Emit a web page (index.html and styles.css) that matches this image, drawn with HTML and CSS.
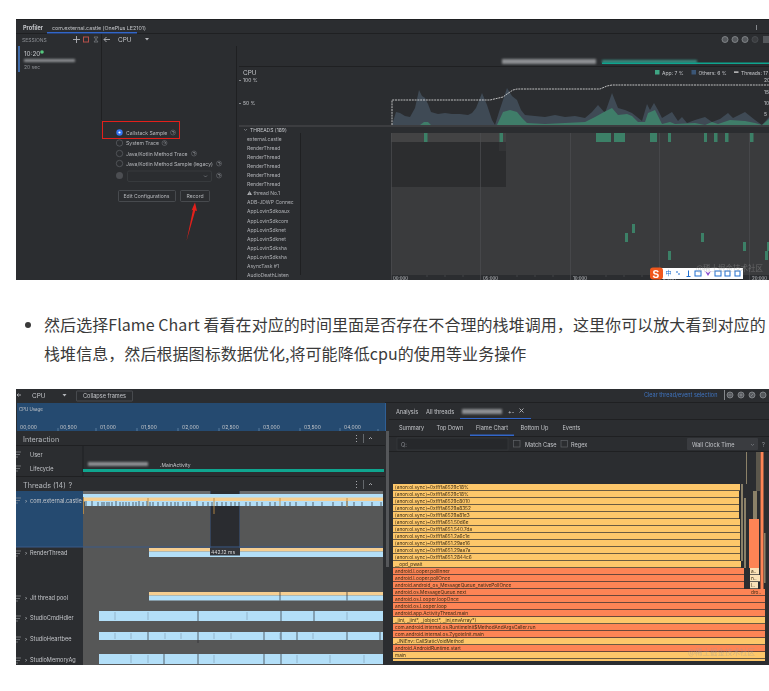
FILE: index.html
```html
<!DOCTYPE html>
<html lang="zh-CN">
<head>
<meta charset="utf-8">
<title>Profiler CPU</title>
<link rel="stylesheet" href="styles.css">
</head>
<body>
<main class="article">
<svg class="shot shot-one" viewBox="16 19 753 261" width="753" height="261" role="img" aria-label="Android Studio Profiler">
  <rect class="bg" x="16" y="19" width="753" height="261"/>
  <rect class="line" x="16" y="33" width="753" height="1"/>
  <rect class="line" x="16" y="19" width="753" height="1"/>
  <rect class="line" x="101" y="34" width="1" height="86"/>
  <rect class="line" x="236" y="46" width="1" height="234"/>
  <text class="t b" x="23" y="29.500">Profiler</text>
  <text class="t tab" x="52" y="29.500">com.external.castle (OnePlus LE2101)</text>
  <rect class="accent" x="47" y="32" width="90" height="1.500"/>
  <text class="t xs dim" x="22" y="41.500">SESSIONS</text>
  <path class="ic" d="M73 39.500h7M76.500 36v7M104 39.500h6M104 39.500l2.500-2.500M104 39.500l2.500 2.500"/>
  <rect class="ic-red" x="83.500" y="37" width="5" height="5"/>
  <path class="ic-dim" d="M94 37h4l-4 5h4z"/>
  <text class="t m" x="118" y="41.800">CPU</text>
  <path class="tri" d="M145 38h4l-2 2.500z"/>
  <rect class="session" x="18" y="46" width="2" height="26"/>
  <text class="t m" x="24" y="55.500">10:20</text>
  <circle class="live" cx="42" cy="52" r="1.800"/>
  <rect class="smear" x="24" y="59" width="51" height="3"/>
  <text class="t xs dim" x="24" y="69">20 sec</text>

  <rect class="line" x="239" y="66" width="530" height="1"/>
  <rect class="smear" x="502" y="59" width="94" height="5"/>
  <rect class="smear-teal" x="602" y="60" width="95" height="3"/>
  <rect class="teal" x="602" y="62.500" width="167" height="1.500"/>
  <g class="round-ic">
    <circle cx="725" cy="39.500" r="3"/><circle cx="735" cy="39.500" r="3"/><circle cx="745" cy="39.500" r="3"/><circle class="off" cx="755" cy="39.500" r="3"/>
  </g>
  <rect class="chip" x="763" y="36" width="6" height="7"/>
  <rect class="ic-rect" x="756" y="25" width="1" height="5"/>

  <text class="t m" x="243" y="75">CPU</text>
  <text class="t xs" x="243" y="82.200">100 %</text>
  <text class="t xs" x="243" y="105">50 %</text>
  <rect class="ic-rect" x="239" y="80" width="2" height="1"/>
  <rect class="ic-rect" x="239" y="103" width="2" height="1"/>
  <rect class="legend-app" x="655" y="70" width="4.500" height="4.500"/>
  <text class="t xs" x="662" y="75">App: 7 %</text>
  <rect class="legend-other" x="691.500" y="70" width="4.500" height="4.500"/>
  <text class="t xs" x="698.500" y="75">Others: 6 %</text>
  <rect class="white" x="734" y="71.500" width="4.500" height="1.200"/>
  <text class="t xs" x="741" y="75">Threads: 17</text>
  <text class="t xs" x="764" y="82">20</text>
  <text class="t xs" x="764" y="94">15</text>
  <text class="t xs" x="764" y="105">10</text>
  <text class="t xs" x="764" y="116">5</text>

  <path class="area-other" d="M392 125L396 112 400 113 405 116 410 117 415 108 419 90 422 96 425 98 428 104 431 112 438 114 445 113 452 114 460 114 468 115 472 113 476 108 482 93 487 105 492 120 495 125 499 112 503 100 507 88 512 96 517 100 521 110 525 115 535 116 545 117 555 115 565 117 575 116 585 118 592 112 598 105 605 113 612 93 618 108 625 110 632 113 642 121 647 104 650 110 654 103 658 110 662 118 667 115 672 112 678 121 682 117 687 123 695 120 705 117 712 122 720 119 728 113 733 118 745 112 755 120 762 125 769 117V126H392z"/>
  <path class="area-app" d="M420 125L424 122 428 122 431 125 H497L503 112 510 110 517 112 522 118 527 123 545 124 565 123 585 122 595 117 604 112 612 108 618 115 627 114 632 116 638 122 645 122 648 113 655 110 659 118 662 124 670 122 675 124 695 123 705 125 712 122 718 124 730 120 745 121 755 123 762 125 769 119V126H420z"/>
  <path class="threads-line" d="M392 125V100H490L503 97 507 94 513 90 517 89H600L607 86 612 85H769"/>

  <rect class="divider" x="239" y="125" width="530" height="2"/>
  <path class="ic-thin" d="M244 129l1.500 1.500 1.500-1.500"/>
  <text class="t xs" x="250" y="132">THREADS (189)</text>
  <rect class="line" x="300" y="133" width="1" height="142"/>
  <g class="t thread">
    <text x="247" y="140.500">external.castle</text>
    <text x="247" y="149.500">RenderThread</text>
    <text x="247" y="158.700">RenderThread</text>
    <text x="247" y="167.800">RenderThread</text>
    <text x="247" y="177">RenderThread</text>
    <text x="247" y="186">RenderThread</text>
    <text x="247" y="195">⚠ thread No.1</text>
    <text x="247" y="204.200">ADB-JDWP Connec</text>
    <text x="247" y="213.300">AppLovinSdkoaux</text>
    <text x="247" y="222.500">AppLovinSdkcom</text>
    <text x="247" y="231.500">AppLovinSdknet</text>
    <text x="247" y="240.500">AppLovinSdknet</text>
    <text x="247" y="249.800">AppLovinSdksha</text>
    <text x="247" y="259">AppLovinSdksha</text>
    <text x="247" y="268">AsyncTask #1</text>
    <text x="247" y="276.500">AudioDeathListen</text>
  </g>
  <rect class="track" x="391" y="133" width="378" height="142"/>
  <rect class="track-row" x="391" y="133" width="115" height="9"/>
  <rect class="track-dark" x="391" y="142" width="115" height="45"/>
  <rect class="track-mid" x="499" y="142" width="7" height="9"/>
  <path class="grid" d="M391.500 133V280M480.500 133V280M570.500 133V280M659.500 133V280M749.500 133V280"/>
  <g class="run">
    <rect x="424" y="133" width="3.500" height="9"/><rect x="499.500" y="133" width="3.500" height="9"/><rect x="596" y="133" width="15" height="9"/><rect x="614" y="133" width="11" height="9"/><rect x="650" y="133" width="7" height="9"/><rect x="668" y="133" width="3" height="9"/><rect x="704" y="133" width="3" height="9"/><rect x="714" y="133" width="3.500" height="9"/><rect x="725" y="133" width="3.500" height="9"/><rect x="750" y="133" width="3.500" height="9"/>
    <rect x="632" y="224" width="3" height="9"/><rect x="625" y="233" width="3" height="9"/><rect x="701" y="233" width="3" height="9"/><rect x="743" y="242" width="3" height="9"/><rect x="767" y="242" width="2" height="9"/><rect x="668" y="251" width="3" height="9"/><rect x="765" y="251" width="3" height="9"/>
  </g>
  <rect class="axis" x="391" y="275" width="378" height="5"/>
  <path class="grid" d="M391.500 275V280M480.500 275V280M570.500 275V280M659.500 275V280M749.500 275V280M427 275v2M445 275v2M463 275v2M517 275v2M535 275v2M553 275v2M606 275v2M624 275v2M642 275v2M695 275v2M713 275v2M731 275v2"/>
  <g class="t xxs">
    <text x="393" y="280">00:000</text><text x="483" y="280">05:000</text><text x="573" y="280">10:000</text><text x="662" y="281.500">15:000</text><text x="752" y="280">20:000</text>
  </g>

  <rect class="redbox" x="102.500" y="121.500" width="77" height="17"/>
  <circle class="radio-on" cx="119.500" cy="132.500" r="3.200"/>
  <circle class="radio-dot" cx="119.500" cy="132.500" r="1.100"/>
  <circle class="radio" cx="119.500" cy="143" r="3.200"/>
  <circle class="radio" cx="119.500" cy="153.500" r="3.200"/>
  <circle class="radio" cx="119.500" cy="163.500" r="3.200"/>
  <circle class="radio-dis" cx="119.500" cy="175.500" r="3.500"/>
  <g class="t opt">
    <text x="126" y="135">Callstack Sample</text>
    <text x="126" y="145.300">System Trace</text>
    <text x="126" y="155.600">Java/Kotlin Method Trace</text>
    <text x="126" y="165.900">Java/Kotlin Method Sample (legacy)</text>
  </g>
  <g class="help">
    <circle cx="173" cy="132.500" r="2.500"/><circle cx="164.500" cy="143" r="2.500"/><circle cx="194" cy="153.500" r="2.500"/><circle cx="219" cy="163.500" r="2.500"/><circle cx="219" cy="175.500" r="2.500"/>
  </g>
  <path class="ic-thin" d="M172 131.800q1-1 2 0t-1 1.500M163.500 142.300q1-1 2 0t-1 1.500M193 152.800q1-1 2 0t-1 1.500M218 162.800q1-1 2 0t-1 1.500M218 174.800q1-1 2 0t-1 1.500"/>
  <rect class="field" x="127.500" y="171" width="84" height="10.500" rx="1.500"/>
  <path class="ic-dim" d="M204 175.500l1.500 1.500 1.500-1.500"/>
  <rect class="btn" x="118.500" y="190.500" width="57" height="11" rx="1"/>
  <rect class="btn" x="180.500" y="190.500" width="29" height="11" rx="1"/>
  <text class="t opt" x="123.500" y="198">Edit Configurations</text>
  <text class="t opt" x="186.500" y="198">Record</text>
  <path class="red-arrow" d="M195 202.500L197 211 195.300 210.500 186.500 241 193 209.800 191.500 210.500z"/>

  <rect class="ime" x="655" y="268" width="88" height="11"/>
  <rect class="ime-s" x="650" y="267.500" width="13" height="12" rx="3"/>
  <text class="ime-s-t" x="652.500" y="277.500">S</text>
  <text class="ime-zh" x="665.500" y="275">中</text>
  <path class="ime-ic" d="M676 272h2M678 274h2M688.500 270.500v6M686.500 276.500h4"/>
  <rect class="ime-box" x="695" y="271" width="6" height="5"/>
  <path class="ime-v" d="M705 271l3 5 3-5-3 2z"/>
  <rect class="ime-box" x="715" y="271" width="6" height="5"/>
  <rect class="ime-box" x="725" y="271" width="5" height="5"/>
  <rect class="ime-box" x="735" y="271" width="5" height="5"/>
  <text class="mark" x="696" y="271">@稀土掘金技术社区</text>
</svg>

<ul class="notes">
  <li>然后选择Flame Chart 看看在对应的时间里面是否存在不合理的栈堆调用，这里你可以放大看到对应的栈堆信息，然后根据图标数据优化,将可能降低cpu的使用等业务操作</li>
</ul>

<svg class="shot shot-two" viewBox="16 389 753 276" width="753" height="276" role="img" aria-label="CPU Flame Chart">
  <rect class="bg" x="16" y="389" width="753" height="276"/>
  <path class="ic" d="M17 395h4M17 395l1.500-1.500M17 395l1.500 1.500"/>
  <text class="t m" x="32" y="397.500">CPU</text>
  <path class="tri" d="M62.500 394h4l-2 2.500z"/>
  <rect class="btn" x="76.500" y="391" width="56" height="10" rx=".5"/>
  <text class="t s" x="83" y="398.200">Collapse frames</text>
  <rect class="usage" x="17" y="403" width="368" height="28"/>
  <text class="t xxs" x="19" y="410.500">CPU Usage</text>
  <g class="t xs">
    <text x="20" y="429">00,000</text><text x="60" y="429">00,500</text><text x="100" y="429">01,000</text><text x="141" y="429">01,500</text><text x="182" y="429">02,000</text><text x="222" y="429">02,500</text><text x="263" y="429">03,000</text><text x="304" y="429">03,500</text><text x="344" y="429">04,000</text>
  </g>
  <path class="grid light" d="M58 428v3M96 428v3M137 428v3M178 428v3M219 428v3M259 428v3M300 428v3M340 428v3M378 429v2"/>

  <rect class="line" x="16" y="445" width="369" height="1"/>
  <rect class="line" x="16" y="476" width="369" height="1"/>
  <rect class="line" x="82.500" y="446" width="1" height="30"/>
  <text class="t h" x="23" y="441.500">Interaction</text>
  <text class="t h" x="23" y="487.500">Threads (14)</text>
  <text class="t h" x="68.500" y="487.500">?</text>
  <path class="ic" d="M356.500 435v1M356.500 438v1M356.500 441v1M356.500 481v1M356.500 484v1M356.500 487v1M369 439l1.500-1.500 1.500 1.500M369 485l1.500-1.500 1.500 1.500"/>
  <path class="ic-dim" d="M363.500 434v9M363.500 480v9"/>
  <text class="t s" x="30" y="457">User</text>
  <text class="t s" x="30" y="470.500">Lifecycle</text>
  <rect class="smear" x="88" y="462" width="60" height="4"/>
  <text class="t xs" x="160" y="467">.MainActivity</text>
  <path class="hook" d="M100 470q14 4 28 0z"/>
  <rect class="teal" x="83" y="469" width="301" height="3"/>

  <rect class="usage" x="16" y="491" width="67" height="56"/>
  <g class="ic-thin">
    <path d="M16 452h5M16 454.500h4M16 457h2"/><path d="M16 466h5M16 468.500h4M16 471h2"/><path d="M16 498h5M16 500.500h4M16 503h2"/><path d="M16 551h5M16 553.500h4M16 556h2"/><path d="M16 596h5M16 598.500h4M16 601h2"/><path d="M16 616h5M16 618.500h4M16 621h2"/><path d="M16 637h5M16 639.500h4M16 642h2"/><path d="M16 658h5M16 660.500h4M16 663h2"/>
  </g>

  <rect class="lane" x="83" y="491" width="300" height="174"/>
  <rect class="lane-dim" x="83" y="491" width="127" height="3"/>
  <rect class="lane-dim" x="240" y="491" width="143" height="3"/>
  <rect class="select" x="210" y="491" width="30" height="60"/>
  <path class="select-edge" d="M210.500 491V551M239.500 491V551"/>
  <rect class="lane-blue" x="83" y="494" width="300" height="7.500"/>
  <rect class="lane-orange" x="83" y="497.500" width="300" height="3.500"/>
  <rect class="lane-blue" x="85" y="501" width="298" height="5"/>
  <path class="tick" d="M86 501v5M92 501v5M98 502v4M102 502v4M104 502v4M107 502v4M109 502v4M112 502v4M116 501v5M120 502v4M123 502v4M126 502v4M129 502v4M133 502v4M136 502v4M139 501v5M143 502v4M147 501v5M150 502v4M153 502v4M158 502v4M163 502v4M167 502v4M171 502v4M175 502v4M178 502v4M183 502v4M187 502v4M190 502v4M197 501v5M203 502v4M208 502v4M212 502v4M217 502v4M222 502v4M226 502v4M231 502v4M235 502v4M239 502v4M246 502v4M250 502v4M257 502v4M262 502v4M270 502v4M275 502v4M285 502v4M290 502v4M296 502v4M306 502v4M313 502v4M322 502v4M333 502v4M342 502v4M347 501v5M354 502v4M362 502v4M372 502v4M381 502v4"/>
  <path class="tick-o" d="M83.500 497v17M148 498v8M214 498v16M280 498v8M347 498v9"/>
  <rect class="line-blue" x="16" y="546.500" width="367" height="1"/>

  <rect class="lane-orange" x="149" y="548" width="234" height="3.500"/>
  <rect class="lane-blue" x="149" y="551.500" width="234" height="5.500"/>
  <rect class="select-tag" x="210" y="548" width="30" height="7.500"/>
  <text class="t xs tag" x="211" y="554">442.12 ms</text>
  <rect class="lane-orange" x="149" y="592" width="234" height="3.500"/>
  <rect class="lane-blue" x="149" y="595.500" width="234" height="5"/>
  <path class="tick" d="M280 592v8.500M347 592v8.500"/>
  <rect class="lane-blue" x="99" y="611" width="284" height="10"/>
  <rect class="lane-blue" x="99" y="632" width="284" height="8"/>
  <rect class="lane-blue" x="99" y="654" width="284" height="10"/>
  <path class="tick-soft" d="M115 612v8M148 612v8M247 612v8M347 612v8M115 633v6M131 633v6M165 633v6M181 633v6M214 633v6M231 633v6M280 633v6M313 633v6M131 655v8M148 655v8M214 655v8M297 655v8M330 655v8M364 655v8"/>
  <path class="tick" d="M198 611v10M281 611v10M314 611v10M148 632v8M198 632v11M264 632v8M281 632v8M297 632v8M347 632v8M380 632v8M164 654v10M198 654v10M264 654v10M281 654v10"/>

  <g class="t s">
    <text x="25" y="502.500">›</text><text x="30" y="502.500">com.external.castle</text>
    <text x="25" y="554.500">›</text><text x="30" y="554.500">RenderThread</text>
    <text x="25" y="599.500">›</text><text x="30" y="599.500">Jit thread pool</text>
    <text x="25" y="619.500">›</text><text x="30" y="619.500">StudioCmdHdler</text>
    <text x="25" y="640.500">›</text><text x="30" y="640.500">StudioHeartbee</text>
    <text x="25" y="661.500">›</text><text x="30" y="661.500">StudioMemoryAg</text>
  </g>
  <rect class="scroll" x="386" y="431" width="3" height="136"/>
  <rect class="scroll-blue" x="385" y="403" width="1" height="28"/>

  <rect class="line" x="385" y="402" width="384" height="1"/>
  <rect class="line" x="389" y="419" width="380" height="1"/>
  <rect class="line" x="389" y="436" width="380" height="1"/>
  <rect class="line" x="389" y="451" width="380" height="1"/>
  <text class="link" x="644" y="397">Clear thread/event selection</text>
  <rect class="ic-rect" x="724" y="390" width="1" height="10"/>
  <g class="round-ic"><circle cx="730" cy="395" r="3"/><circle cx="741" cy="395" r="3"/><circle cx="752" cy="395" r="3"/><circle cx="763" cy="395" r="3"/></g>
  <path class="ic-thin" d="M728.500 395h3M739.500 395h3M741 393.500v3M750.500 396.500l3-3"/>
  <text class="t s" x="396" y="413.500">Analysis</text>
  <text class="t s" x="426" y="413.500">All threads</text>
  <rect class="smear" x="462" y="409" width="40" height="5"/>
  <text class="t s" x="508" y="414">+-</text>
  <path class="ic" d="M519.500 408.500l4 4M523.500 408.500l-4 4"/>
  <rect class="accent" x="460" y="418" width="71" height="1"/>
  <g class="t s">
    <text x="399" y="429.500">Summary</text><text x="436.500" y="429.500">Top Down</text><text x="476" y="429.500">Flame Chart</text><text x="520.500" y="429.500">Bottom Up</text><text x="562.500" y="429.500">Events</text>
  </g>
  <rect class="accent" x="470" y="434.500" width="44" height="1.500"/>
  <rect class="search" x="397" y="438" width="111" height="12"/>
  <text class="t s dim" x="401" y="446.500">Q:</text>
  <rect class="check" x="513.500" y="440.500" width="6.500" height="6.500"/>
  <text class="t s" x="525" y="446.500">Match Case</text>
  <rect class="check" x="561" y="440.500" width="6.500" height="6.500"/>
  <text class="t s" x="571" y="446.500">Regex</text>
  <rect class="combo" x="687" y="438" width="71" height="12" rx="1"/>
  <text class="t s" x="692" y="446.500">Wall Clock Time</text>
  <path class="ic-dim" d="M751 444l1.500 1.500 1.500-1.500"/>
  <text class="t s dim" x="762" y="447">?</text>

  <g class="fg-y">
    <rect x="393" y="484" width="347" height="6.300"/><rect x="393" y="491" width="346" height="6.300"/><rect x="393" y="498" width="346" height="6.300"/><rect x="393" y="505" width="346" height="6.300"/><rect x="393" y="512" width="346" height="6.300"/><rect x="393" y="519" width="347" height="6.300"/><rect x="393" y="526" width="347" height="6.300"/><rect x="393" y="533" width="347" height="6.300"/><rect x="393" y="540" width="347" height="6.300"/><rect x="393" y="547" width="347" height="6.300"/><rect x="393" y="554" width="347" height="6.300"/><rect x="393" y="561" width="348" height="6.300"/>
    <rect x="393" y="617" width="372" height="6.300"/><rect x="393" y="638" width="372" height="6.300"/><rect x="393" y="652" width="372" height="6.300"/>
    <rect x="393" y="659" width="372" height="2"/>
  </g>
  <g class="fg-o">
    <rect x="393" y="568" width="351" height="6.300"/><rect x="393" y="575" width="351" height="6.300"/><rect x="393" y="582" width="351" height="6.300"/><rect x="393" y="589" width="372" height="6.300"/><rect x="393" y="596" width="372" height="6.300"/><rect x="393" y="603" width="372" height="6.300"/><rect x="393" y="610" width="372" height="6.300"/><rect x="393" y="624" width="372" height="6.300"/><rect x="393" y="631" width="372" height="6.300"/><rect x="393" y="645" width="372" height="6.300"/>
    <rect x="760.500" y="452" width="3" height="137"/><rect x="749" y="519" width="10" height="49"/>
  </g>
  <g class="fg-p">
    <rect x="750" y="568" width="9" height="6.300"/><rect x="750" y="575" width="10" height="6.300"/><rect x="750" y="582" width="8" height="6.300"/>
  </g>
  <g class="fg-g">
    <rect x="746" y="452" width="1" height="32"/><rect x="756.500" y="452" width="1" height="39"/><rect x="758.500" y="452" width="1" height="39"/><rect x="741" y="484" width="2" height="77"/><rect x="744" y="498" width="2" height="70"/><rect x="753" y="491" width="4" height="28"/><rect x="764" y="533" width="1.500" height="50"/>
  </g>
  <g class="fg-t">
    <text x="395" y="489.300">[anon:ol.sync]~0xffffa6529c18%</text>
    <text x="395" y="496.300">[anon:ol.sync]~0xffffa6529c18%</text>
    <text x="395" y="503.300">[anon:ol.sync]~0xffffa6529c8010</text>
    <text x="395" y="510.300">[anon:ol.sync]~0xffffa6529a8352</text>
    <text x="395" y="517.300">[anon:ol.sync]~0xffffa6529a81e3</text>
    <text x="395" y="524.300">[anon:ol.sync]~0xffffa651.50d6e</text>
    <text x="395" y="531.300">[anon:ol.sync]~0xffffa651.540.7da</text>
    <text x="395" y="538.300">[anon:ol.sync]~0xffffa651.2a6c1e</text>
    <text x="395" y="545.300">[anon:ol.sync]~0xffffa651.29ae16</text>
    <text x="395" y="552.300">[anon:ol.sync]~0xffffa651.29aa7a</text>
    <text x="395" y="559.300">[anon:ol.sync]~0xffffa651.2844c6</text>
    <text x="395" y="566.300">__opd_pwait</text>
    <text x="395" y="573.300">android.Looper.pollInner</text>
    <text x="395" y="580.300">android.Looper.pollOnce</text>
    <text x="395" y="587.300">android.android_os_MessageQueue_nativePollOnce</text>
    <text x="395" y="594.300">android.os.MessageQueue.next</text>
    <text x="395" y="601.300">android.os.Looper.loopOnce</text>
    <text x="395" y="608.300">android.os.Looper.loop</text>
    <text x="395" y="615.300">android.app.ActivityThread.main</text>
    <text x="395" y="622.300">_jint, _jint*, _jobject*, _jni,envArray*)</text>
    <text x="395" y="629.300">com.android.internal.os.RuntimeInit$MethodAndArgsCaller.run</text>
    <text x="395" y="636.300">com.android.internal.os.ZygoteInit.main</text>
    <text x="395" y="643.300">_JNIEnv::CallStaticVoidMethod</text>
    <text x="395" y="650.300">android.AndroidRuntime.start</text>
    <text x="395" y="657.300">main</text>
    <text x="751" y="573.300">a..</text><text x="751" y="580.300">n..</text><text x="751" y="587.300">l..</text><text x="751" y="594.300">dro..</text>
  </g>
  <text class="mark" x="688" y="655">@稀土掘金技术社区</text>
</svg>
</main>
</body>
</html>
```
FILE: styles.css
```css
* { box-sizing: border-box; }
html, body { margin: 0; background: #fff; }
.article { width: 769px; padding: 19px 0 0 16px; }
.shot { display: block; filter: blur(.45px); }
.notes {
  margin: 30px 0 21px;
  padding: 0 0 0 28px;
  font: 16px/29px "Noto Sans CJK SC", "Noto Sans", sans-serif;
  letter-spacing: .065px;
  color: #3a3a3a;
}

.bg { fill: #2b2d30; }
.line { fill: #1f2022; }
.accent { fill: #3574f0; opacity: .8; }
.t { font-family: Inter, "Liberation Sans", sans-serif; font-size: 5.600px; fill: #c4c6ca; }
.b { font-weight: 700; }
.tab { font-size: 5.300px; }
.m { font-size: 6.400px; }
.xs { font-size: 5px; }
.xxs { font-size: 4.400px; }
.s { font-size: 5.600px; }
.h { font-size: 7.200px; fill: #b5b8bc; }
.dim { fill: #8c8f94; }
.thread { font-size: 5px; fill: #b0b2b6; }
.opt { font-size: 5.100px; fill: #b6b8bc; }
.tag { fill: #d8d8d8; }

.ic { fill: none; stroke: #b4b6ba; stroke-width: .9; }
.ic-dim { fill: none; stroke: #74777c; stroke-width: .8; }
.ic-thin { fill: none; stroke: #9a9da2; stroke-width: .6; }
.ic-red { fill: none; stroke: #b5504a; stroke-width: 1; }
.ic-rect { fill: #85888c; }
.tri { fill: #b4b6ba; }
.session { fill: #3f6aa8; }
.live { fill: #55c77d; }
.smear { fill: #8d8f92; filter: blur(1.200px); }
.smear-teal { fill: #3b8f83; filter: blur(1.200px); }
.teal { fill: #0fa58f; }
.round-ic circle { fill: #55585c; stroke: #8d9094; stroke-width: .8; }
.round-ic .off { fill: #3a3c3f; stroke: #4d5054; }
.chip { fill: #55585c; }

.legend-app { fill: #3fa583; }
.legend-other { fill: #3b5676; }
.white { fill: #e8e8e8; }
.area-other { fill: #3f4a55; }
.area-app { fill: #3f7d69; }
.threads-line { fill: none; stroke: #e5e5e5; stroke-width: .8; stroke-dasharray: 2 .8; }
.divider { fill: #3c3d40; }

.track { fill: #3a3b3d; }
.track-row { fill: #434344; }
.track-dark { fill: #2c2d2f; }
.track-mid { fill: #333436; }
.grid { fill: none; stroke: #4c4e50; stroke-width: .7; }
.grid.light { stroke: #6f8fb0; }
.run rect { fill: #3c8067; }
.axis { fill: #2b2d30; }

.redbox { fill: none; stroke: #e3201b; stroke-width: 1; }
.radio-on { fill: #3574f0; }
.radio-dot { fill: #fff; }
.radio { fill: none; stroke: #5e6166; stroke-width: .7; }
.radio-dis { fill: #4c4e52; }
.help circle { fill: none; stroke: #6a6d72; stroke-width: .6; }
.field { fill: #2b2d30; stroke: #3e4044; stroke-width: .7; }
.btn { fill: #2b2d30; stroke: #55585c; stroke-width: .7; }
.red-arrow { fill: #e3201b; }

.mark { font: 7.500px "Noto Sans CJK SC", sans-serif; fill: #9a9a9a; opacity: .45; }
.ime { fill: #fff; }
.ime-s { fill: #f0571c; }
.ime-s-t { font: 700 10px "Liberation Sans", sans-serif; fill: #fff; }
.ime-zh { font: 6px "Noto Sans CJK SC", sans-serif; fill: #1f6fd0; }
.ime-ic { fill: none; stroke: #1f6fd0; stroke-width: 1; }
.ime-box { fill: none; stroke: #1f6fd0; stroke-width: 1; }
.ime-v { fill: #8b4fd0; }

.usage { fill: #254a70; }
.hook { fill: #1f7f72; }
.lane { fill: #565757; }
.lane-dim { fill: #6a6b6c; }
.lane-blue { fill: #b3dff8; }
.lane-orange { fill: #f6ce90; }
.tick { fill: none; stroke: #2b2d30; stroke-width: .7; }
.tick-soft { fill: none; stroke: #7f9cae; stroke-width: .6; }
.tick-o { fill: none; stroke: #b98a45; stroke-width: .9; }
.select { fill: #2a2c30; }
.select-edge { fill: none; stroke: #3a4a66; stroke-width: .8; }
.select-tag { fill: #33353a; }
.line-blue { fill: #3a5a88; }
.scroll { fill: #55575a; }
.scroll-blue { fill: #2f5f96; }
.link { font: 5.500px Inter, "Liberation Sans", sans-serif; fill: #3f74c0; }
.search { fill: #26282b; stroke: #3a3c40; stroke-width: .6; }
.check { fill: none; stroke: #5e6166; stroke-width: .7; }
.combo { fill: #3a3c40; }
.fg-y rect { fill: #fdc76a; }
.fg-o rect { fill: #fd8455; }
.fg-p rect { fill: #fbe2b8; }
.fg-g rect { fill: #8b8168; }
.fg-t text { font: 4.750px Inter, "Liberation Sans", sans-serif; fill: #3a2a12; }
```
